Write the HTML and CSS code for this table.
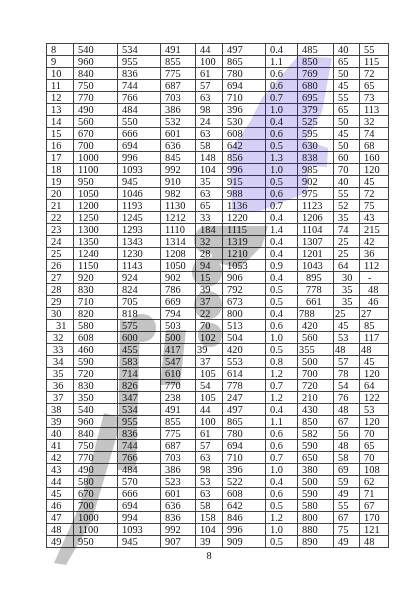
FILE: index.html
```html
<!DOCTYPE html>
<html>
<head>
<meta charset="utf-8">
<link rel="stylesheet" href="styles.css">
</head>
<body>
<div class="page">
<table class="data">
<colgroup>
<col class="c1"><col class="c2"><col class="c3"><col class="c4"><col class="c5"><col class="c6"><col class="c7"><col class="c8"><col class="c9"><col class="c10">
</colgroup>
<tbody>
<tr><td>8</td><td>540</td><td>534</td><td>491</td><td>44</td><td>497</td><td>0.4</td><td>485</td><td>40</td><td>55</td></tr>
<tr><td>9</td><td>960</td><td>955</td><td>855</td><td>100</td><td>865</td><td>1.1</td><td>850</td><td>65</td><td>115</td></tr>
<tr><td>10</td><td>840</td><td>836</td><td>775</td><td>61</td><td>780</td><td>0.6</td><td>769</td><td>50</td><td>72</td></tr>
<tr><td>11</td><td>750</td><td>744</td><td>687</td><td>57</td><td>694</td><td>0.6</td><td>680</td><td>45</td><td>65</td></tr>
<tr><td>12</td><td>770</td><td>766</td><td>703</td><td>63</td><td>710</td><td>0.7</td><td>695</td><td>55</td><td>73</td></tr>
<tr><td>13</td><td>490</td><td>484</td><td>386</td><td>98</td><td>396</td><td>1.0</td><td>379</td><td>65</td><td>113</td></tr>
<tr><td>14</td><td>560</td><td>550</td><td>532</td><td>24</td><td>530</td><td>0.4</td><td>525</td><td>50</td><td>32</td></tr>
<tr><td>15</td><td>670</td><td>666</td><td>601</td><td>63</td><td>608</td><td>0.6</td><td>595</td><td>45</td><td>74</td></tr>
<tr><td>16</td><td>700</td><td>694</td><td>636</td><td>58</td><td>642</td><td>0.5</td><td>630</td><td>50</td><td>68</td></tr>
<tr><td>17</td><td>1000</td><td>996</td><td>845</td><td>148</td><td>856</td><td>1.3</td><td>838</td><td>60</td><td>160</td></tr>
<tr><td>18</td><td>1100</td><td>1093</td><td>992</td><td>104</td><td>996</td><td>1.0</td><td>985</td><td>70</td><td>120</td></tr>
<tr><td>19</td><td>950</td><td>945</td><td>910</td><td>35</td><td>915</td><td>0.5</td><td>902</td><td>40</td><td>45</td></tr>
<tr><td>20</td><td>1050</td><td>1046</td><td>982</td><td>63</td><td>988</td><td>0.6</td><td>975</td><td>55</td><td>72</td></tr>
<tr><td>21</td><td>1200</td><td>1193</td><td>1130</td><td>65</td><td>1136</td><td>0.7</td><td>1123</td><td>52</td><td>75</td></tr>
<tr><td>22</td><td>1250</td><td>1245</td><td>1212</td><td>33</td><td>1220</td><td>0.4</td><td>1206</td><td>35</td><td>43</td></tr>
<tr><td>23</td><td>1300</td><td>1293</td><td>1110</td><td>184</td><td>1115</td><td>1.4</td><td>1104</td><td>74</td><td>215</td></tr>
<tr><td>24</td><td>1350</td><td>1343</td><td>1314</td><td>32</td><td>1319</td><td>0.4</td><td>1307</td><td>25</td><td>42</td></tr>
<tr><td>25</td><td>1240</td><td>1230</td><td>1208</td><td>28</td><td>1210</td><td>0.4</td><td>1201</td><td>25</td><td>36</td></tr>
<tr><td>26</td><td>1150</td><td>1143</td><td>1050</td><td>94</td><td>1053</td><td>0.9</td><td>1043</td><td>64</td><td>112</td></tr>
<tr><td>27</td><td>920</td><td>924</td><td>902</td><td>15</td><td>906</td><td>0.4</td><td class="mid">895</td><td class="mid">30</td><td class="mid">-</td></tr>
<tr><td>28</td><td>830</td><td>824</td><td>786</td><td>39</td><td>792</td><td>0.5</td><td class="mid">778</td><td class="mid">35</td><td class="mid">48</td></tr>
<tr><td>29</td><td>710</td><td>705</td><td>669</td><td>37</td><td>673</td><td>0.5</td><td class="mid">661</td><td class="mid">35</td><td class="mid">46</td></tr>
<tr><td>30</td><td>820</td><td>818</td><td>794</td><td>22</td><td>800</td><td>0.4</td><td class="tight">788</td><td class="tight">25</td><td class="tight">27</td></tr>
<tr><td class="ind">31</td><td>580</td><td>575</td><td>503</td><td>70</td><td>513</td><td>0.6</td><td>420</td><td>45</td><td>85</td></tr>
<tr><td class="ind2">32</td><td>608</td><td>600</td><td>500</td><td>102</td><td>504</td><td>1.0</td><td>560</td><td>53</td><td>117</td></tr>
<tr><td class="ind2">33</td><td>460</td><td>455</td><td>417</td><td class="tight">39</td><td>420</td><td>0.5</td><td class="tight">355</td><td class="tight">48</td><td class="tight">48</td></tr>
<tr><td class="ind2">34</td><td>590</td><td>583</td><td>547</td><td>37</td><td>553</td><td>0.8</td><td>500</td><td>57</td><td>45</td></tr>
<tr><td class="ind2">35</td><td>720</td><td>714</td><td>610</td><td>105</td><td>614</td><td>1.2</td><td>700</td><td>78</td><td>120</td></tr>
<tr><td class="ind2">36</td><td>830</td><td>826</td><td>770</td><td>54</td><td>778</td><td>0.7</td><td>720</td><td>54</td><td>64</td></tr>
<tr><td class="ind2">37</td><td>350</td><td>347</td><td>238</td><td>105</td><td>247</td><td>1.2</td><td>210</td><td>76</td><td>122</td></tr>
<tr><td>38</td><td>540</td><td>534</td><td>491</td><td>44</td><td>497</td><td>0.4</td><td>430</td><td>48</td><td>53</td></tr>
<tr><td>39</td><td>960</td><td>955</td><td>855</td><td>100</td><td>865</td><td>1.1</td><td>850</td><td>67</td><td>120</td></tr>
<tr><td>40</td><td>840</td><td>836</td><td>775</td><td>61</td><td>780</td><td>0.6</td><td>582</td><td>56</td><td>70</td></tr>
<tr><td>41</td><td>750</td><td>744</td><td>687</td><td>57</td><td>694</td><td>0.6</td><td>590</td><td>48</td><td>65</td></tr>
<tr><td>42</td><td>770</td><td>766</td><td>703</td><td>63</td><td>710</td><td>0.7</td><td>650</td><td>58</td><td>70</td></tr>
<tr><td>43</td><td>490</td><td>484</td><td>386</td><td>98</td><td>396</td><td>1.0</td><td>380</td><td>69</td><td>108</td></tr>
<tr><td>44</td><td>580</td><td>570</td><td>523</td><td>53</td><td>522</td><td>0.4</td><td>500</td><td>59</td><td>62</td></tr>
<tr><td>45</td><td>670</td><td>666</td><td>601</td><td>63</td><td>608</td><td>0.6</td><td>590</td><td>49</td><td>71</td></tr>
<tr><td>46</td><td>700</td><td>694</td><td>636</td><td>58</td><td>642</td><td>0.5</td><td>580</td><td>55</td><td>67</td></tr>
<tr><td>47</td><td>1000</td><td>994</td><td>836</td><td>158</td><td>846</td><td>1.2</td><td>800</td><td>67</td><td>170</td></tr>
<tr><td>48</td><td>1100</td><td>1093</td><td>992</td><td>104</td><td>996</td><td>1.0</td><td>880</td><td>75</td><td>121</td></tr>
<tr><td>49</td><td>950</td><td>945</td><td>907</td><td>39</td><td>909</td><td>0.5</td><td>890</td><td>49</td><td>48</td></tr>
</tbody>
</table>
<div class="pageno">8</div>
<svg class="watermark" width="420" height="596" viewBox="0 0 420 596" aria-hidden="true">
  <path class="wm-purple" d="M298,56 L332,58 L322,112 L306,140 L328,148 L327,167 L308,166 L308,192 L258,212 L232,212 L230,150 L250,122 L262,98 Z"/>
  <g class="wm-gray">
    <path d="M54,563 L66,565 L92,520 L122,418 L104,413 L80,505 Z"/>
    <path d="M118,470 L136,470 L140,322 L120,320 Z"/>
    <path d="M160,385 L180,385 L186,330 L166,330 Z"/>
    <circle cx="142" cy="328" r="14"/>
    <circle cx="208" cy="240" r="14"/>
    <circle cx="207" cy="272" r="15"/>
    <circle cx="208" cy="305" r="14"/>
    <circle cx="210" cy="335" r="12"/>
    <path d="M210,226 L268,226 L262,246 L240,268 L212,262 Z"/>
  </g>
</svg>
</div>
</body>
</html>
```
FILE: styles.css
```css
html, body {
  margin: 0;
  padding: 0;
  background: #ffffff;
}
.page {
  position: relative;
  width: 420px;
  height: 596px;
  overflow: hidden;
  padding-top: 43px;
  box-sizing: border-box;
}
.data {
  margin-left: 46px;
  border-collapse: collapse;
  table-layout: fixed;
  width: 342px;
  font-family: "Liberation Serif", "Times New Roman", serif;
  font-size: 10.4px;
  color: #111111;
}
.c1 { width: 27px; }
.c2 { width: 44px; }
.c3 { width: 43px; }
.c4 { width: 35px; }
.c5 { width: 27px; }
.c6 { width: 43px; }
.c7 { width: 32px; }
.c8 { width: 36px; }
.c9 { width: 26px; }
.c10 { width: 29px; }
.data td {
  border: 1px solid #444444;
  height: 11px;
  line-height: 11px;
  padding: 0 0 0 4px;
  white-space: nowrap;
  overflow: visible;
  vertical-align: middle;
}
.data td.mid { padding-left: 8px; }
.data td.tight { padding-left: 1px; }
.data td.ind { padding-left: 9px; }
.data td.ind2 { padding-left: 6px; }
.pageno {
  width: 420px;
  text-align: center;
  margin-top: 2px;
  padding-right: 2px;
  box-sizing: border-box;
  font-family: "Liberation Serif", "Times New Roman", serif;
  font-size: 10.4px;
  color: #111111;
}
.watermark {
  position: absolute;
  top: 0;
  left: 0;
  mix-blend-mode: multiply;
  pointer-events: none;
}
.wm-purple { fill: #d6cff6; }
.wm-gray { fill: #c4c4c4; }
```
